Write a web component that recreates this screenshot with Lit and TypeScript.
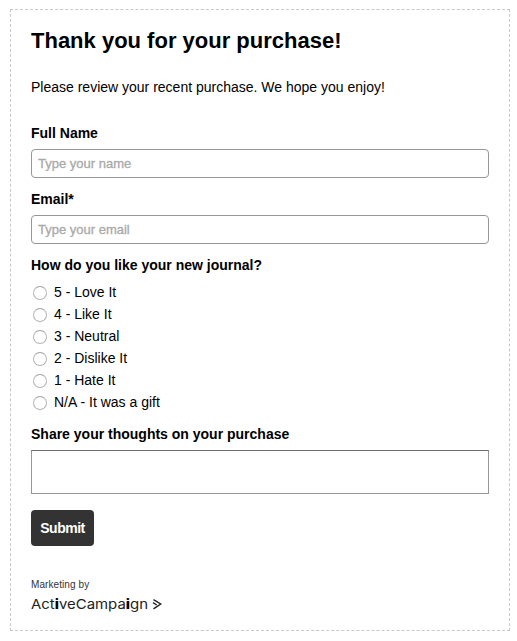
import { LitElement, html, css } from "lit";
import { customElement } from "lit/decorators.js";

@customElement("app-root")
export class AppRoot extends LitElement {
  static styles = css`
    :host {
      display: block;
      box-sizing: border-box;
      width: 517px;
      height: 641px;
      padding: 9px 7px 10px 10px;
      background: #fff;
      color: #000;
      font: 14px/18px "Liberation Sans", Arial, sans-serif;
    }
    * { box-sizing: border-box; }
    .form {
      display: flex;
      flex-direction: column;
      align-items: stretch;
      width: 500px;
      height: 622px;
      padding: 17px 20px 0;
      border: 1px dashed #c8c8c8;
      margin: 0;
    }
    .title {
      margin: 0;
      font-size: 22px;
      line-height: 28px;
      font-weight: 700;
      white-space: nowrap;
    }
    .intro { margin: 23px 0 0; white-space: nowrap; }
    .label { font-weight: 700; white-space: nowrap; }
    .name { margin-top: 28px; }
    .field { display: flex; flex-direction: column; gap: 7px; }
    .email { margin-top: 12px; }
    .input {
      width: 458px;
      height: 29px;
      margin: 0;
      padding: 0 6px;
      border: 1px solid #979797;
      border-radius: 4px;
      background: #fff;
      font: 13px "Liberation Sans", Arial, sans-serif;
      outline: none;
    }
    .input::placeholder { color: #a9a9a9; opacity: 1; -webkit-text-stroke: 0.3px #a9a9a9; }
    .question { margin-top: 12px; }
    .options { display: flex; flex-direction: column; margin-top: 7px; }
    .option {
      display: flex;
      align-items: center;
      height: 22px;
      padding-left: 2px;
      gap: 7px;
    }
    .radio {
      appearance: none;
      width: 14px;
      height: 14px;
      margin: 1px 0 0;
      border: 1px solid #b4b4b4;
      border-top-color: #a2a2a2;
      border-radius: 50%;
      background: #fff;
    }
    .thoughts { margin-top: 12px; }
    .area {
      width: 458px;
      height: 44px;
      margin: 0;
      border: 1px solid #979797;
      border-top-color: #6e6e6e;
      border-radius: 0;
      resize: none;
      background: #fff;
    }
    .submit {
      width: 63px;
      height: 36px;
      margin: 16px 0 0;
      padding: 0;
      border: 0;
      border-radius: 4px;
      background: #333;
      color: #fff;
      font: 700 14px "Liberation Sans", Arial, sans-serif;
      letter-spacing: -0.5px;
    }
    .by { margin-top: 32px; font-size: 10px; line-height: 14px; letter-spacing: 0.08px; color: #333; }
    .logo { display: block; margin-top: 3px; }
    .word { font: 400 13.5px Inter, "Open Sans", sans-serif; fill: #222; }
    .heavy { font-weight: 800; fill: #000; }
    .mark { fill: none; stroke: #222; stroke-width: 1.4; }
  `;

  private options = ["5 - Love It", "4 - Like It", "3 - Neutral", "2 - Dislike It", "1 - Hate It", "N/A - It was a gift"];

  render() {
    return html`
      <form class="form">
        <h1 class="title">Thank you for your purchase!</h1>
        <p class="intro">Please review your recent purchase. We hope you enjoy!</p>
        <label class="field name"><span class="label">Full Name</span><input class="input" placeholder="Type your name" /></label>
        <label class="field email"><span class="label">Email*</span><input class="input" placeholder="Type your email" /></label>
        <div class="label question">How do you like your new journal?</div>
        <div class="options">
          ${this.options.map((o) => html`<label class="option"><input class="radio" type="radio" name="rating" /><span>${o}</span></label>`)}
        </div>
        <label class="field thoughts"><span class="label">Share your thoughts on your purchase</span><textarea class="area"></textarea></label>
        <button class="submit" type="button">Submit</button>
        <div class="by">Marketing by</div>
        <svg class="logo" width="134" height="20" viewBox="0 0 134 20">
          <text class="word" x="0" y="14" textLength="117" lengthAdjust="spacingAndGlyphs">Act<tspan class="heavy">i</tspan>veCampa<tspan class="heavy">i</tspan>gn</text>
          <path class="mark" d="M122.5 4.6 L129.7 9 L122.5 13.9 M122 7.6 L125.8 10" />
        </svg>
      </form>
    `;
  }
}
